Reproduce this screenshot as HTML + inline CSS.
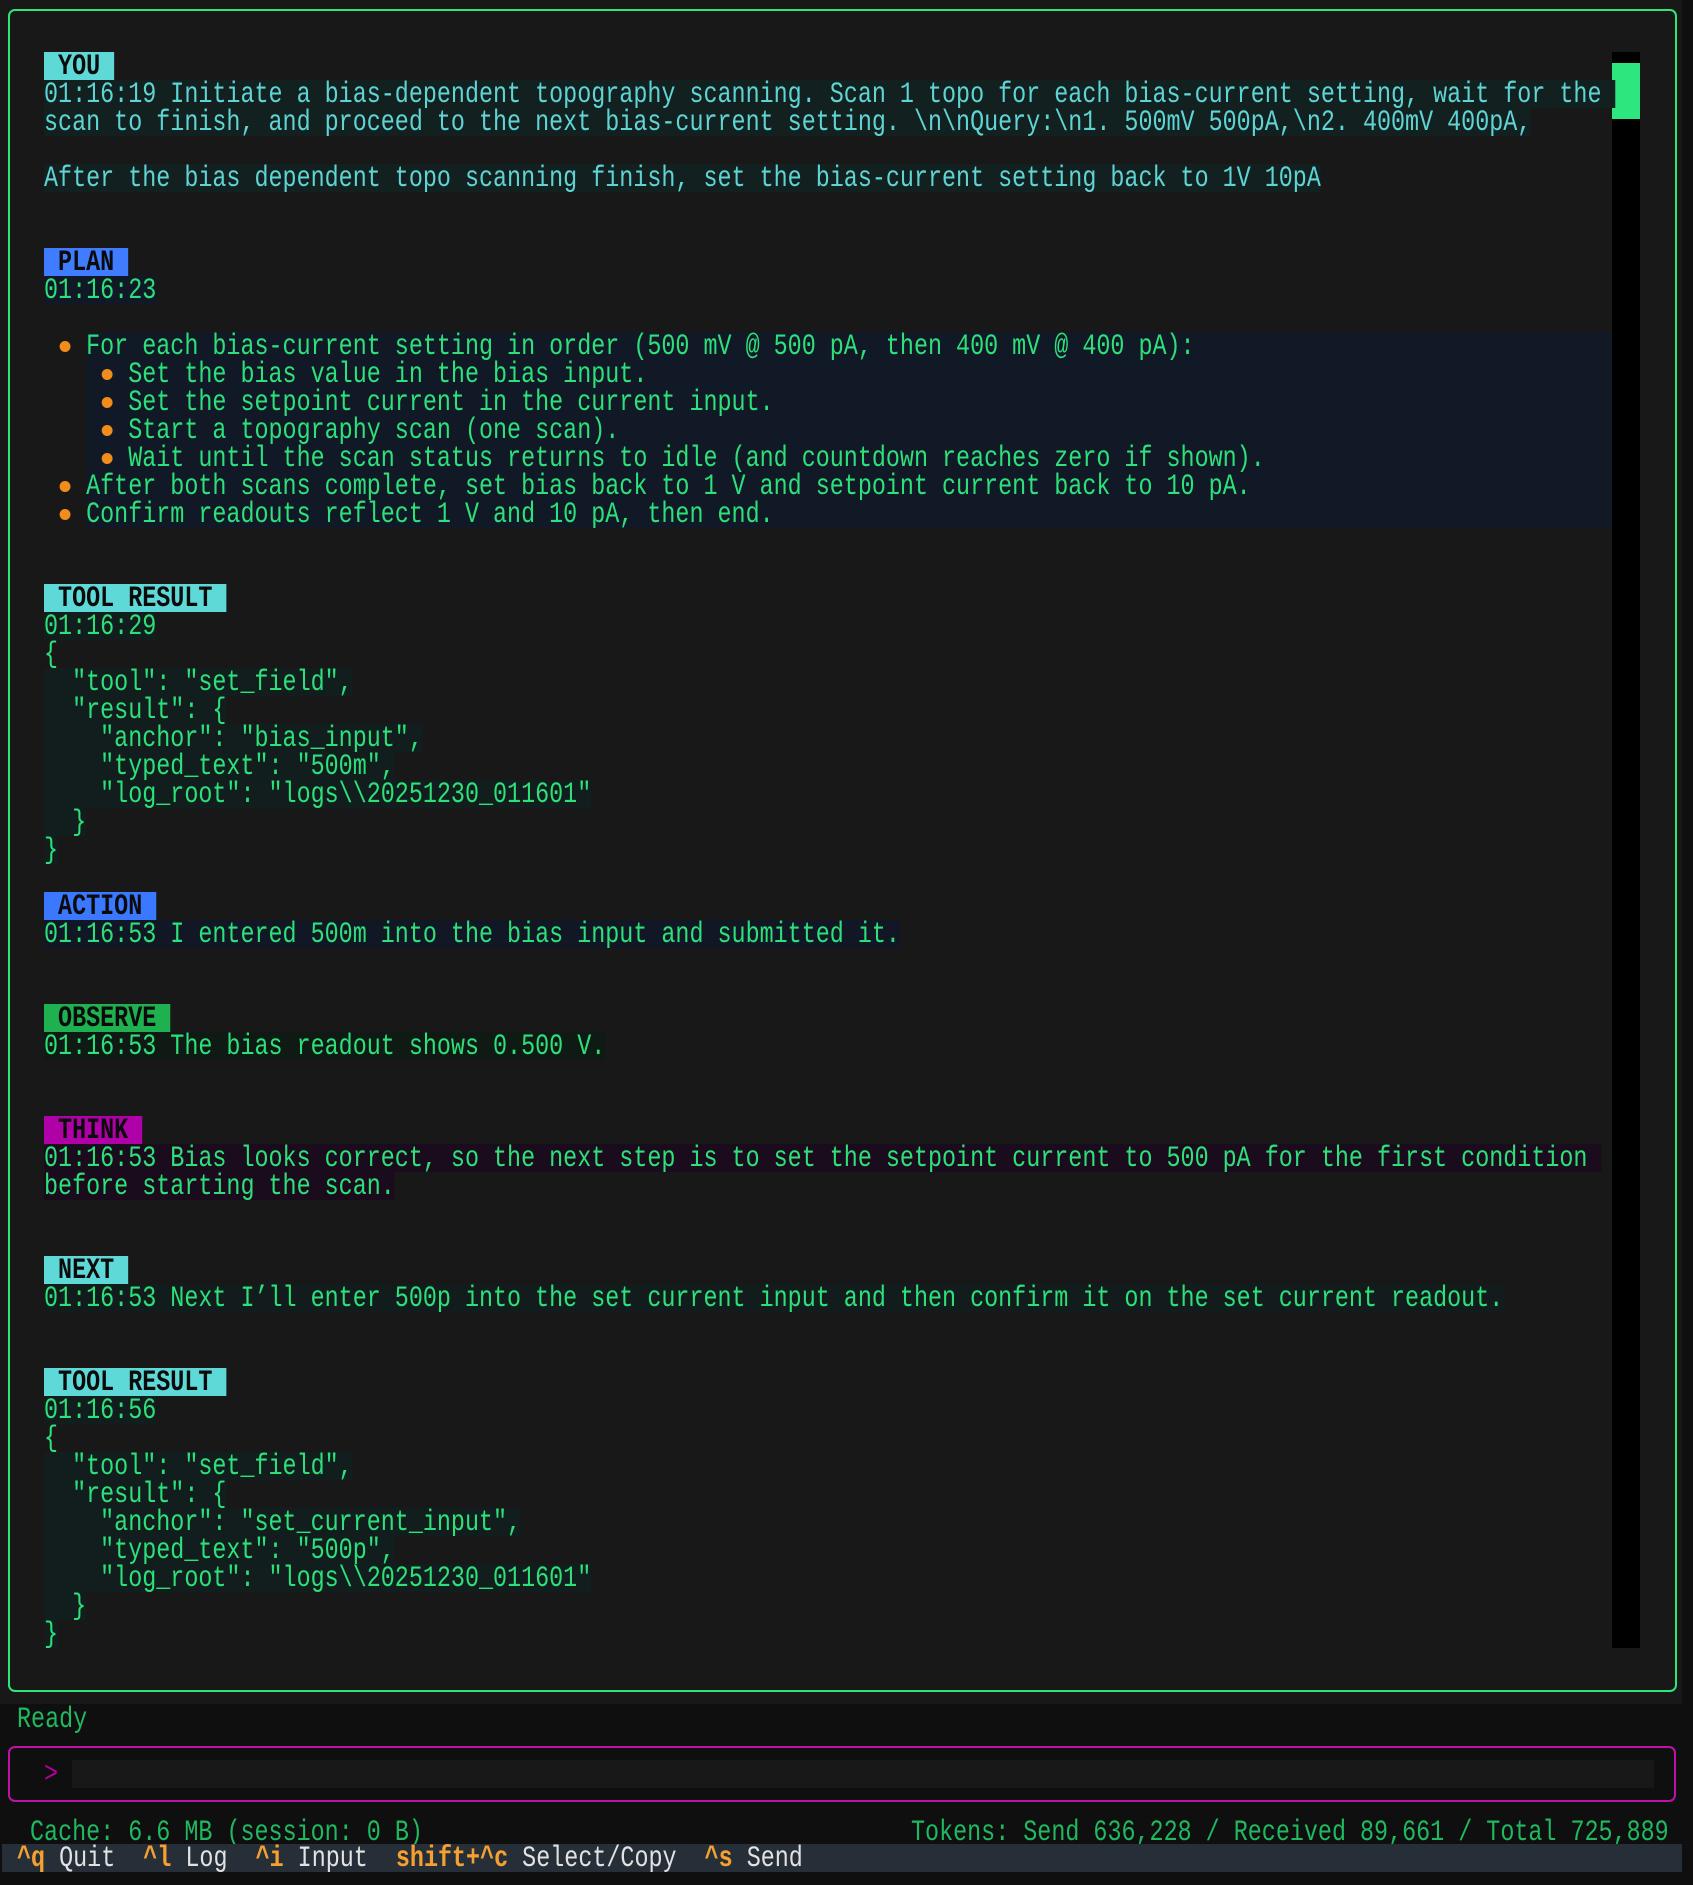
<!DOCTYPE html>
<html><head><meta charset="utf-8">
<style>
*{margin:0;padding:0;box-sizing:border-box}
html,body{width:1693px;height:1885px;overflow:hidden;background:#0f0f0f}
#top{position:absolute;left:0;top:0;width:1682px;height:1704px;background:#181818}
#frame{position:absolute;left:8px;top:9px;width:1669px;height:1683px;border:2px solid #2ee57a;border-radius:7px}
.r{position:absolute;left:44px;height:28px;transform:scaleX(0.7794);transform-origin:0 0;white-space:pre;font-family:"Liberation Mono","DejaVu Sans Mono",monospace;font-size:30px;line-height:28px;color:#2de07a}
.r span{display:inline-block;height:28px;line-height:31px;white-space:pre;overflow:hidden;vertical-align:top}
.c{color:#5fd4d4}
.lab{font-weight:bold;color:#0b0b0b}
.by{background:#132020}
.bp{background:#111826}
.bt{background:#121d1d}
.ba{background:#111724}
.bo{background:#0f1a14}
.bk{background:#1a0c1c}
.bn{background:#121c1c}
#plan{position:absolute;left:86px;top:332px;width:1526px;height:196px;background:#111826}
.o{display:inline-block;width:18px;height:28px;position:relative;vertical-align:top}
.o::after{content:"";position:absolute;left:2px;top:9px;width:14px;height:11px;border-radius:50%;background:#f28c1c}
#sb{position:absolute;left:1612px;top:52px;width:28px;height:1596px;background:#000}
#th{position:absolute;left:1612px;top:63px;width:28px;height:56px;background:#2ee67e}
.f{position:absolute;height:28px;line-height:31px;white-space:pre;font-family:"Liberation Mono","DejaVu Sans Mono",monospace;font-size:30px;transform:scaleX(0.7794);transform-origin:0 0}
#inbox{position:absolute;left:8px;top:1746px;width:1668px;height:56px;border:2px solid #c010a8;border-radius:7px}
#field{position:absolute;left:72px;top:1760px;width:1582px;height:28px;background:#181818}
#bar{position:absolute;left:2px;top:1844px;width:1680px;height:28px;background:#262f38}
.k{color:#f5a030;font-weight:bold}
.w{color:#e2e2e2}
</style></head><body>
<div id="top"></div>
<div id="frame"></div>
<div id="plan"></div>
<div id="sb"></div><div id="th"></div>

<div class="r" style="top:52px"><span class="lab" style="background:#5fd8d8"> YOU </span></div>
<div class="r c" style="top:80px"><span class="by">01:16:19 Initiate a bias-dependent topography scanning. Scan 1 topo for each bias-current setting, wait for the </span></div>
<div class="r c" style="top:108px"><span class="by">scan to finish, and proceed to the next bias-current setting. \n\nQuery:\n1. 500mV 500pA,\n2. 400mV 400pA,</span></div>
<div class="r c" style="top:164px"><span class="by">After the bias dependent topo scanning finish, set the bias-current setting back to 1V 10pA</span></div>

<div class="r" style="top:248px"><span class="lab" style="background:#3f7cff"> PLAN </span></div>
<div class="r" style="top:276px"><span class="bp">01:16:23</span></div>
<div class="r" style="top:332px"><span> <i class="o"></i> For each bias-current setting in order (500 mV @ 500 pA, then 400 mV @ 400 pA):</span></div>
<div class="r" style="top:360px"><span>    <i class="o"></i> Set the bias value in the bias input.</span></div>
<div class="r" style="top:388px"><span>    <i class="o"></i> Set the setpoint current in the current input.</span></div>
<div class="r" style="top:416px"><span>    <i class="o"></i> Start a topography scan (one scan).</span></div>
<div class="r" style="top:444px"><span>    <i class="o"></i> Wait until the scan status returns to idle (and countdown reaches zero if shown).</span></div>
<div class="r" style="top:472px"><span> <i class="o"></i> After both scans complete, set bias back to 1 V and setpoint current back to 10 pA.</span></div>
<div class="r" style="top:500px"><span> <i class="o"></i> Confirm readouts reflect 1 V and 10 pA, then end.</span></div>

<div class="r" style="top:584px"><span class="lab" style="background:#5fd8d8"> TOOL RESULT </span></div>
<div class="r" style="top:612px"><span class="bt">01:16:29</span></div>
<div class="r" style="top:640px"><span>{</span></div>
<div class="r" style="top:668px"><span class="bt">  "tool": "set_field",</span></div>
<div class="r" style="top:696px"><span class="bt">  "result": {</span></div>
<div class="r" style="top:724px"><span class="bt">    "anchor": "bias_input",</span></div>
<div class="r" style="top:752px"><span class="bt">    "typed_text": "500m",</span></div>
<div class="r" style="top:780px"><span class="bt">    "log_root": "logs\\20251230_011601"</span></div>
<div class="r" style="top:808px"><span class="bt">  }</span></div>
<div class="r" style="top:836px"><span class="bt">}</span></div>

<div class="r" style="top:892px"><span class="lab" style="background:#3a78ff"> ACTION </span></div>
<div class="r" style="top:920px"><span class="ba">01:16:53 I entered 500m into the bias input and submitted it.</span></div>

<div class="r" style="top:1004px"><span class="lab" style="background:#1fb050"> OBSERVE </span></div>
<div class="r" style="top:1032px"><span class="bo">01:16:53 The bias readout shows 0.500 V.</span></div>

<div class="r" style="top:1116px"><span class="lab" style="background:#b000a8"> THINK </span></div>
<div class="r" style="top:1144px"><span class="bk">01:16:53 Bias looks correct, so the next step is to set the setpoint current to 500 pA for the first condition </span></div>
<div class="r" style="top:1172px"><span class="bk">before starting the scan.</span></div>

<div class="r" style="top:1256px"><span class="lab" style="background:#5fd8d8"> NEXT </span></div>
<div class="r" style="top:1284px"><span class="bn">01:16:53 Next I’ll enter 500p into the set current input and then confirm it on the set current readout.</span></div>

<div class="r" style="top:1368px"><span class="lab" style="background:#5fd8d8"> TOOL RESULT </span></div>
<div class="r" style="top:1396px"><span class="bt">01:16:56</span></div>
<div class="r" style="top:1424px"><span>{</span></div>
<div class="r" style="top:1452px"><span class="bt">  "tool": "set_field",</span></div>
<div class="r" style="top:1480px"><span class="bt">  "result": {</span></div>
<div class="r" style="top:1508px"><span class="bt">    "anchor": "set_current_input",</span></div>
<div class="r" style="top:1536px"><span class="bt">    "typed_text": "500p",</span></div>
<div class="r" style="top:1564px"><span class="bt">    "log_root": "logs\\20251230_011601"</span></div>
<div class="r" style="top:1592px"><span class="bt">  }</span></div>
<div class="r" style="top:1620px"><span class="bt">}</span></div>

<div class="f" style="left:17px;top:1705px;color:#20b860">Ready</div>
<div id="inbox"></div>
<div id="field"></div>
<div class="f" style="left:44px;top:1760px;color:#b0009f">&gt;</div>
<div class="f" style="left:30px;top:1818px;color:#20b860">Cache: 6.6 MB (session: 0 B)</div>
<div class="f" style="left:911px;top:1818px;color:#20b860">Tokens: Send 636,228 / Received 89,661 / Total 725,889</div>
<div id="bar"></div>
<div class="f" style="left:17px;top:1844px"><span class="k">^q</span><span class="w"> Quit  </span><span class="k">^l</span><span class="w"> Log  </span><span class="k">^i</span><span class="w"> Input  </span><span class="k">shift+^c</span><span class="w"> Select/Copy  </span><span class="k">^s</span><span class="w"> Send</span></div>
</body></html>
